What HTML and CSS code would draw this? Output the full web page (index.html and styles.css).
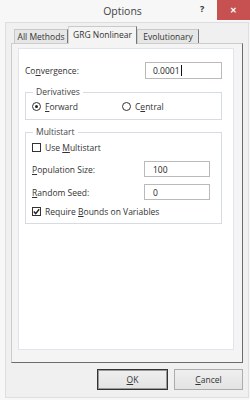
FILE: index.html
```html
<!DOCTYPE html>
<html lang="en">
<head>
    <meta charset="UTF-8">
    <title>Options</title>
    <link rel="stylesheet" href="styles.css">
</head>
<body>

    <div class="titlebar">
        <span class="title">Options</span>
        <span class="help">?</span>
        <span class="close">&#x2715;</span>
    </div>

    <div class="client">
        <div class="tabs">
            <div class="tab tab-all">All Methods</div>
            <div class="tab tab-grg active">GRG Nonlinear</div>
            <div class="tab tab-evo">Evolutionary</div>
        </div>

        <div class="frame">
            <div class="page">
                <div class="row conv-row">
                    <span>Co<u>n</u>vergence:</span>
                    <div class="field">0.0001<span class="caret"></span></div>
                </div>

                <fieldset class="group derivs">
                    <legend>Derivatives</legend>
                    <div class="radios">
                        <label class="radio"><span class="dot on"></span><span><u>F</u>orward</span></label>
                        <label class="radio"><span class="dot"></span><span>C<u>e</u>ntral</span></label>
                    </div>
                </fieldset>

                <fieldset class="group multi">
                    <legend>Multistart</legend>
                    <label class="check"><span class="box"></span><span>Use <u>M</u>ultistart</span></label>
                    <div class="row multi-row pop">
                        <span><u>P</u>opulation Size:</span>
                        <div class="field">100</div>
                    </div>
                    <div class="row multi-row seed">
                        <span><u>R</u>andom Seed:</span>
                        <div class="field">0</div>
                    </div>
                    <label class="check bounds">
                        <span class="box">
                            <svg width="7" height="7" viewBox="0 0 7 7"><path d="M0.8 3.6 L2.7 5.6 L6.2 1.2" fill="none" stroke="#222" stroke-width="1.4"/></svg>
                        </span>
                        <span>Require <u>B</u>ounds on Variables</span>
                    </label>
                </fieldset>
            </div>
        </div>

        <div class="buttons">
            <button class="btn btn-ok"><u>O</u>K</button>
            <button class="btn btn-cancel"><u>C</u>ancel</button>
        </div>
    </div>

</body>
</html>
```

FILE: styles.css
```css
body {
    margin: 0;
    width: 250px;
    height: 400px;
    overflow: hidden;
    background-color: #f7f7f7;
    font-family: "Open Sans", "Noto Sans", sans-serif;
    font-size: 8.5px;
    color: #333;
}

u {
    text-decoration: underline;
    text-underline-offset: 1px;
}

/* title bar */
.titlebar {
    display: flex;
    align-items: flex-start;
    height: 22px;
}

.title {
    flex: 1;
    padding-left: 47px;
    text-align: center;
    font-size: 10.5px;
    line-height: 22px;
    color: #444;
}

.help {
    width: 17px;
    padding-left: 2px;
    font-size: 9px;
    font-weight: bold;
    line-height: 18px;
    color: #333;
}

.close {
    width: 33px;
    height: 20px;
    background-color: #c75050;
    color: #fff;
    font-size: 8px;
    font-weight: bold;
    line-height: 20px;
    text-align: center;
}

/* dialog body */
.client {
    box-sizing: border-box;
    width: 244px;
    height: 376px;
    margin-left: 5px;
    padding: 3px 5px 0 5px;
    background-color: #f0f0f0;
    border: 1px solid #dedede;
}

.tabs {
    display: flex;
    align-items: flex-end;
    height: 17px;
    padding-left: 3px;
}

.tab {
    box-sizing: border-box;
    height: 14px;
    line-height: 13px;
    text-align: center;
    background-color: #e6e6e6;
    border: 1px solid #c9c9c9;
    border-right-color: #777;
    border-bottom: none;
    color: #333;
}

.tab-all {
    width: 54px;
}

.tab-grg {
    width: 69px;
}

.tab-evo {
    width: 62px;
}

.tab.active {
    position: relative;
    z-index: 1;
    height: 18px;
    margin-bottom: -1px;
    line-height: 15px;
    background-color: #f4f4f4;
    border-left-color: #d0d0d0;
}

.frame {
    box-sizing: border-box;
    display: flex;
    flex-direction: column;
    height: 320px;
    padding: 4px 8px 12px 6px;
    background-color: #f4f4f4;
    border: 1px solid #cccccc;
    border-right-color: #6b6b6b;
    border-bottom-color: #6b6b6b;
}

.page {
    flex: 1;
    padding: 13px 11px 0 6px;
    background-color: #fff;
    border: 1px solid #dfe5ea;
}

.row {
    display: grid;
    align-items: center;
}

.conv-row {
    grid-template-columns: 1fr 77px;
}

.field {
    box-sizing: border-box;
    display: flex;
    align-items: center;
    height: 17px;
    padding-left: 7px;
    background-color: #fff;
    border: 1px solid #bababa;
    color: #222;
}

.caret {
    width: 1px;
    height: 11px;
    margin-left: 1px;
    background-color: #111;
}

/* group boxes */
.group {
    margin: 0;
    padding: 2px 6px 7px 6px;
    border: 1px solid #d6dce2;
    min-width: 0;
}

.group legend {
    margin-left: 1px;
    padding: 0 3px;
    line-height: 12px;
    color: #444;
}

.derivs {
    margin-top: 7px;
}

.multi {
    margin-top: 6px;
    padding-top: 3px;
    padding-bottom: 6px;
}

.radios {
    display: grid;
    grid-template-columns: 90px auto;
    height: 12px;
    align-items: center;
}

.radio,
.check {
    display: flex;
    align-items: center;
    height: 12px;
}

.dot {
    box-sizing: border-box;
    display: flex;
    align-items: center;
    justify-content: center;
    width: 9px;
    height: 9px;
    margin-right: 4px;
    border: 1px solid #333;
    border-radius: 50%;
    background-color: #fff;
}

.dot.on::after {
    content: "";
    width: 3px;
    height: 3px;
    border-radius: 50%;
    background-color: #222;
}

.box {
    box-sizing: border-box;
    display: flex;
    align-items: center;
    justify-content: center;
    width: 9px;
    height: 9px;
    margin-right: 4px;
    border: 1px solid #333;
    background-color: #fff;
}

.multi-row {
    grid-template-columns: 112px 66px;
}

.multi-row .field {
    height: 16px;
    padding-left: 8px;
}

.pop {
    margin-top: 8px;
}

.seed {
    margin-top: 7px;
}

.bounds {
    margin-top: 5px;
}

/* bottom buttons */
.buttons {
    display: flex;
    justify-content: flex-end;
    gap: 6px;
    margin-top: 6px;
}

.btn {
    box-sizing: border-box;
    height: 21px;
    padding: 0;
    font-family: inherit;
    font-size: 8.5px;
    color: #333;
    background: linear-gradient(#efefef, #e3e3e3);
    border: 1px solid #acacac;
}

.btn-ok {
    width: 71px;
    border-color: #333;
    box-shadow: inset 0 0 0 1px #9a9a9a;
}

.btn-cancel {
    width: 69px;
}
```
